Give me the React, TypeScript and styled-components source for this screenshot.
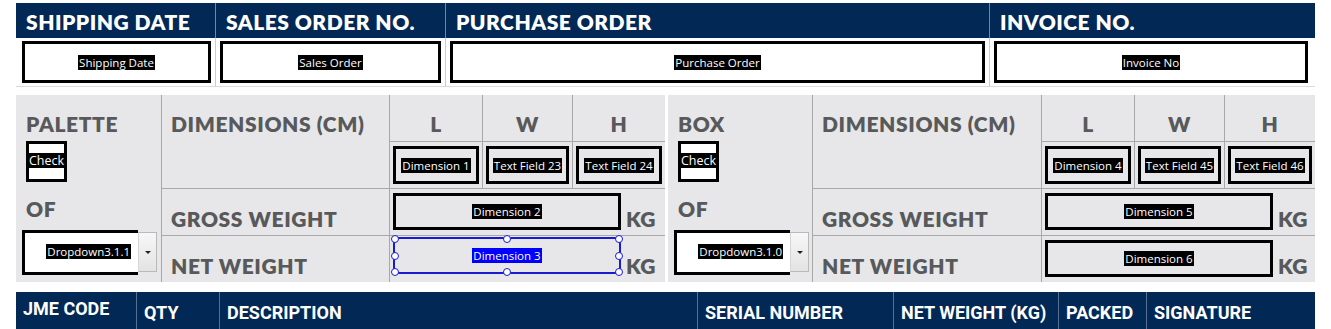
import React from 'react'
import styled, { createGlobalStyle } from 'styled-components'

const NAVY = '#022856'
const PANEL = '#e7e7e9'
const GRID = '#a8a8a8'
const LABEL = '#58595b'

const GlobalStyle = createGlobalStyle`
  html, body {
    margin: 0;
    padding: 0;
    background: #fff;
    overflow: hidden;
  }
  body {
    font-family: "Lato", "Open Sans", sans-serif;
  }
  * { box-sizing: border-box; }
`

const Page = styled.div`
  width: 1315px;
  padding: 3px 0 0 16px;
`

/* ---------- top table ---------- */

const TopTable = styled.div`
  display: grid;
  grid-template-columns: 199px 230px 544px 326px;
  width: 1299px;
`

const HeadCell = styled.div<{ $first?: boolean }>`
  height: 35px;
  background: ${NAVY};
  color: #fff;
  font-family: "Lato", sans-serif;
  font-weight: 800;
  font-size: 21px;
  letter-spacing: 0.5px;
  line-height: 35px;
  padding: 1px 0 0 10px;
  white-space: nowrap;
  border-left: ${p => (p.$first ? 'none' : '1px solid #6f86a5')};
`

const FieldCell = styled.div<{ $first?: boolean; $last?: boolean }>`
  height: 49px;
  display: flex;
  padding: 3px ${p => (p.$last ? '7px' : '4px')} 3px ${p => (p.$first ? '6px' : '4px')};
  border-left: ${p => (p.$first ? 'none' : '1px solid #cdcdcd')};
  border-bottom: 1px solid #dcdcdc;
  background: #fff;
`

const InputBox = styled.div`
  flex: 1;
  height: 42px;
  border: 3px solid #000;
  background: #fff;
  display: flex;
  align-items: center;
  justify-content: center;
`

const Hl = styled.span<{ $sel?: boolean }>`
  background: ${p => (p.$sel ? '#0000ff' : '#000')};
  color: #fff;
  font-family: "Open Sans", sans-serif;
  font-size: 11.5px;
  line-height: 15px;
  padding: 0 1px;
  white-space: nowrap;
`

/* ---------- palette / box panels ---------- */

const Middle = styled.div`
  display: flex;
  gap: 3px;
  margin-top: 8px;
`

const Panel = styled.div<{ $cols: string }>`
  display: grid;
  grid-template-columns: ${p => p.$cols};
  grid-template-rows: 47px 47px 47px 46px;
  background: ${PANEL};
`

const Label = styled.div`
  color: ${LABEL};
  font-family: "Lato", sans-serif;
  font-weight: 800;
  font-size: 21px;
  line-height: 24px;
  letter-spacing: 0.6px;
  white-space: nowrap;
`

const SideCell = styled.div`
  grid-column: 1;
  grid-row: 1 / 5;
  padding: 17px 0 0 10px;
  display: flex;
  flex-direction: column;
  align-items: flex-start;
`

const DimsLabelCell = styled(Label)`
  grid-column: 2;
  grid-row: 1 / 3;
  padding: 17px 9px 0;
  border-left: 1px solid ${GRID};
  border-bottom: 1px solid ${GRID};
`

const AxisCell = styled(Label)<{ $col: number }>`
  grid-column: ${p => p.$col};
  grid-row: 1;
  text-align: center;
  padding-top: 17px;
  border-left: 1px solid ${GRID};
  border-bottom: 1px solid ${GRID};
`

const DimCell = styled.div<{ $col: number }>`
  grid-column: ${p => p.$col};
  grid-row: 2;
  display: flex;
  padding: 4px 3px 3px 3px;
  border-left: 1px solid ${GRID};
  border-bottom: 1px solid ${GRID};
`

const SmallBox = styled.div`
  flex: 1;
  height: 38px;
  border: 3px solid #000;
  display: flex;
  align-items: center;
  justify-content: center;
`

const WeightLabel = styled(Label)<{ $row: number }>`
  grid-column: 2;
  grid-row: ${p => p.$row};
  display: flex;
  align-items: flex-end;
  padding: 0 9px 4px;
  border-left: 1px solid ${GRID};
  border-bottom: ${p => (p.$row === 3 ? `1px solid ${GRID}` : 'none')};
`

const WeightCell = styled.div<{ $row: number }>`
  grid-column: 3 / 6;
  grid-row: ${p => p.$row};
  display: flex;
  align-items: flex-start;
  padding: 4px 0 0 3px;
  border-left: 1px solid ${GRID};
  border-bottom: ${p => (p.$row === 3 ? `1px solid ${GRID}` : 'none')};
`

const WeightBox = styled.div<{ $sel?: boolean }>`
  position: relative;
  width: 228px;
  height: 37px;
  border: ${p => (p.$sel ? '2px solid #1a1ad0' : '3px solid #000')};
  margin-top: ${p => (p.$sel ? '-3px' : '0')};
  display: flex;
  align-items: center;
  justify-content: center;
`

const Unit = styled(Label)`
  align-self: flex-end;
  margin-left: 5px;
  padding-bottom: 4px;
  letter-spacing: 0.2px;
`

const Handle = styled.span<{ $x: string; $y: string }>`
  position: absolute;
  left: ${p => p.$x};
  top: ${p => p.$y};
  width: 8px;
  height: 8px;
  margin: -4px 0 0 -4px;
  border-radius: 50%;
  border: 1.5px solid #1a1ad0;
  background: #fff;
`

const CheckBox = styled.div`
  width: 41px;
  height: 41px;
  margin-top: 5px;
  border: 3px solid #000;
  background: #fff;
  padding-top: 9px;
`

const CheckText = styled.div`
  background: #000;
  color: #fff;
  font-family: "Open Sans", sans-serif;
  font-size: 12.5px;
  line-height: 15px;
`

const OfLabel = styled(Label)`
  margin-top: 15px;
`

const Dropdown = styled.div`
  display: flex;
  width: 135px;
  height: 45px;
  margin: 9px 0 0 -4px;
`

const DropField = styled.div`
  flex: 1;
  border: 3px solid #000;
  border-right: none;
  background: #fff;
  display: flex;
  align-items: center;
  justify-content: flex-end;
  padding: 0 7px 2px 0;
`

const DropButton = styled.div`
  width: 19px;
  margin: 2px 0 3px;
  background: linear-gradient(#f7f7f7, #e3e3e3);
  border: 1px solid #b9b9b9;
  border-left-color: #d5d5d5;
  display: flex;
  align-items: center;
  justify-content: center;

  &::after {
    content: '';
    border-left: 3px solid transparent;
    border-right: 3px solid transparent;
    border-top: 3px solid #222;
  }
`

/* ---------- items header ---------- */

const ItemsHead = styled.div`
  display: grid;
  grid-template-columns: 120px 83px 478px 196px 165px 88px 169px;
  width: 1299px;
  height: 40px;
  margin-top: 10px;
  background: ${NAVY};
`

const ItemsHeadCell = styled.div<{ $first?: boolean }>`
  color: #fff;
  font-family: Roboto, sans-serif;
  font-weight: 700;
  font-size: 18px;
  line-height: 22px;
  white-space: nowrap;
  padding: ${p => (p.$first ? '6px' : '10px')} 0 0 7px;
  border-left: ${p => (p.$first ? 'none' : '1px solid #566f92')};
`

type PanelProps = {
  cols: string
  title: string
  dims: string[]
  gross: string
  net: string
  dropdown: string
  netSelected?: boolean
}

const handles: [string, string][] = [
  ['0%', '0%'], ['50%', '0%'], ['100%', '0%'],
  ['0%', '50%'], ['100%', '50%'],
  ['0%', '100%'], ['50%', '100%'], ['100%', '100%'],
]

const PackPanel = ({ cols, title, dims, gross, net, dropdown, netSelected }: PanelProps) => (
  <Panel $cols={cols}>
    <SideCell>
      <Label>{title}</Label>
      <CheckBox>
        <CheckText>Check</CheckText>
      </CheckBox>
      <OfLabel>OF</OfLabel>
      <Dropdown>
        <DropField>
          <Hl>{dropdown}</Hl>
        </DropField>
        <DropButton />
      </Dropdown>
    </SideCell>

    <DimsLabelCell>DIMENSIONS (CM)</DimsLabelCell>
    {['L', 'W', 'H'].map((a, i) => (
      <AxisCell key={a} $col={i + 3}>{a}</AxisCell>
    ))}
    {dims.map((d, i) => (
      <DimCell key={d} $col={i + 3}>
        <SmallBox>
          <Hl>{d}</Hl>
        </SmallBox>
      </DimCell>
    ))}

    <WeightLabel $row={3}>GROSS WEIGHT</WeightLabel>
    <WeightCell $row={3}>
      <WeightBox>
        <Hl>{gross}</Hl>
      </WeightBox>
      <Unit>KG</Unit>
    </WeightCell>

    <WeightLabel $row={4}>NET WEIGHT</WeightLabel>
    <WeightCell $row={4}>
      <WeightBox $sel={netSelected}>
        <Hl $sel={netSelected}>{net}</Hl>
        {netSelected && handles.map(([x, y]) => <Handle key={x + y} $x={x} $y={y} />)}
      </WeightBox>
      <Unit>KG</Unit>
    </WeightCell>
  </Panel>
)

const topFields = [
  { head: 'SHIPPING DATE', value: 'Shipping Date' },
  { head: 'SALES ORDER NO.', value: 'Sales Order' },
  { head: 'PURCHASE ORDER', value: 'Purchase Order' },
  { head: 'INVOICE NO.', value: 'Invoice No' },
]

const itemCols = ['JME CODE', 'QTY', 'DESCRIPTION', 'SERIAL NUMBER', 'NET WEIGHT (KG)', 'PACKED', 'SIGNATURE']

const App = () => {
  return (
    <Page>
      <GlobalStyle />
      <TopTable>
        {topFields.map((f, i) => (
          <HeadCell key={f.head} $first={i === 0}>{f.head}</HeadCell>
        ))}
        {topFields.map((f, i) => (
          <FieldCell key={f.value} $first={i === 0} $last={i === topFields.length - 1}>
            <InputBox>
              <Hl>{f.value}</Hl>
            </InputBox>
          </FieldCell>
        ))}
      </TopTable>

      <Middle>
        <PackPanel
          cols="145px 228px 93px 90px 93px"
          title="PALETTE"
          dims={['Dimension 1', 'Text Field 23', 'Text Field 24']}
          gross="Dimension 2"
          net="Dimension 3"
          dropdown="Dropdown3.1.1"
          netSelected
        />
        <PackPanel
          cols="144px 229px 93px 90px 91px"
          title="BOX"
          dims={['Dimension 4', 'Text Field 45', 'Text Field 46']}
          gross="Dimension 5"
          net="Dimension 6"
          dropdown="Dropdown3.1.0"
        />
      </Middle>

      <ItemsHead>
        {itemCols.map((c, i) => (
          <ItemsHeadCell key={c} $first={i === 0}>{c}</ItemsHeadCell>
        ))}
      </ItemsHead>
    </Page>
  )
}

export default App
